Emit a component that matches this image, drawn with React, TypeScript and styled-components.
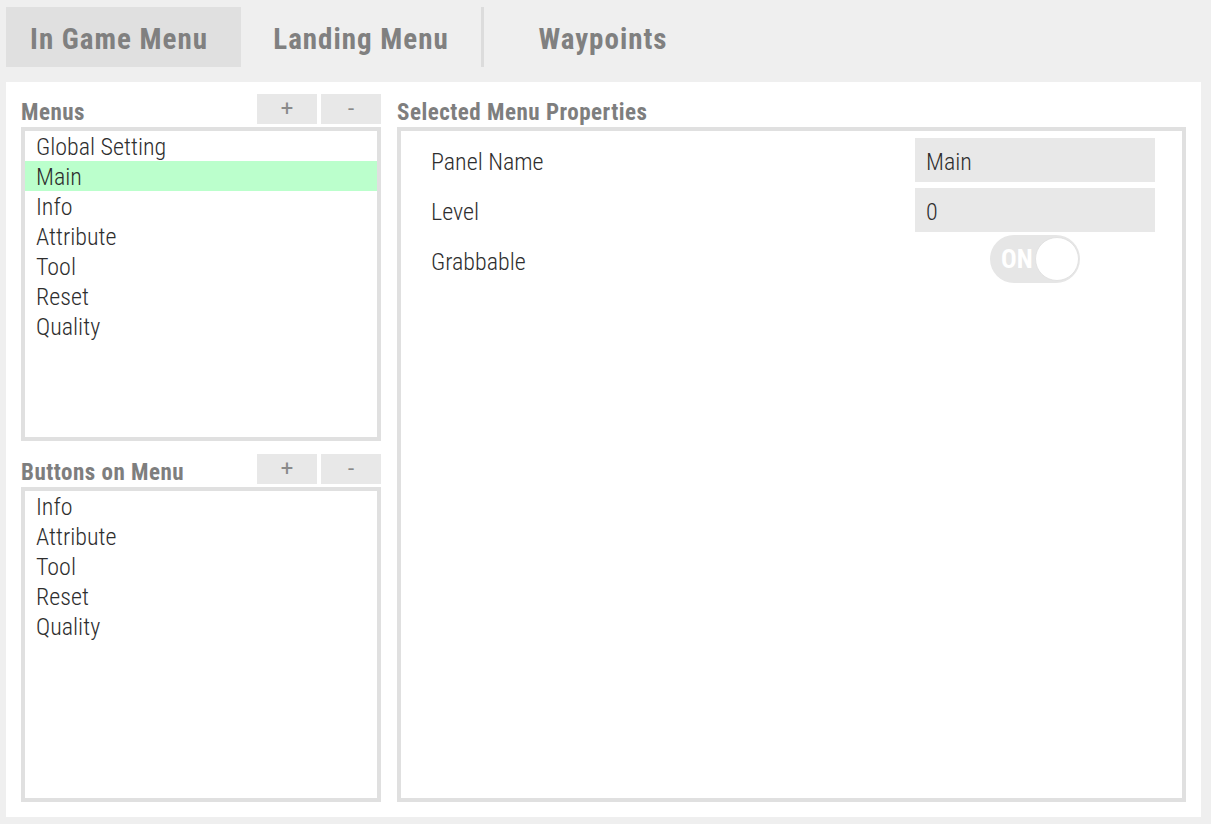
import React, { useState } from "react";
import styled, { createGlobalStyle } from "styled-components";

const GlobalStyle = createGlobalStyle`
  html, body {
    margin: 0;
    padding: 0;
    background: #efefef;
  }
  body {
    font-family: Roboto, "Liberation Sans", sans-serif;
    font-stretch: condensed;
  }
  * { box-sizing: border-box; }
`;

const Page = styled.div`
  width: 1211px;
  height: 824px;
  padding: 7px 10px 7px 6px;
  display: flex;
  flex-direction: column;
  gap: 15px;
`;

const TabBar = styled.div`
  display: flex;
  height: 60px;
`;

const Tab = styled.button<{ $active?: boolean; $divider?: boolean; $w: number; $shift?: number }>`
  width: ${(p) => p.$w}px;
  height: 60px;
  border: none;
  border-right: ${(p) => (p.$divider ? "3px solid #dcdcdc" : "none")};
  background: ${(p) => (p.$active ? "#e0e0e0" : "transparent")};
  font-family: Roboto, "Liberation Sans", sans-serif;
  font-stretch: condensed;
  font-weight: 700;
  font-size: 29px;
  letter-spacing: 1px;
  color: #808080;
  padding: 4px ${(p) => p.$shift ?? 0}px 0 0;
  cursor: pointer;
`;

const Panel = styled.div`
  flex: 1;
  background: #ffffff;
  padding: 12px 15px 15px 15px;
  display: flex;
  gap: 16px;
`;

const LeftColumn = styled.div`
  width: 360px;
  display: flex;
  flex-direction: column;
`;

const RightColumn = styled.div`
  flex: 1;
  display: flex;
  flex-direction: column;
`;

const Section = styled.div<{ $grow?: boolean }>`
  display: flex;
  flex-direction: column;
  flex: ${(p) => (p.$grow ? 1 : "none")};
  & + & {
    margin-top: 13px;
  }
`;

const Header = styled.div`
  height: 30px;
  margin-bottom: 3px;
  display: flex;
  align-items: flex-end;
  gap: 4px;
`;

const Label = styled.div`
  flex: 1;
  font-weight: 700;
  font-size: 23px;
  letter-spacing: 0.5px;
  color: #7e7e7e;
  line-height: 23px;
  margin-bottom: 0;
  white-space: nowrap;
`;

const SmallButton = styled.button`
  width: 60px;
  height: 30px;
  border: none;
  background: #e8e8e8;
  color: #8a8a8a;
  font-family: Roboto, "Liberation Sans", sans-serif;
  font-size: 22px;
  line-height: 30px;
  padding: 0;
  align-self: flex-start;
  cursor: pointer;
`;

const Box = styled.div<{ $h?: number }>`
  border: 4px solid #e0e0e0;
  background: #ffffff;
  height: ${(p) => (p.$h ? `${p.$h}px` : "auto")};
  flex: ${(p) => (p.$h ? "none" : 1)};
  overflow: hidden;
`;

const ListItem = styled.div<{ $selected?: boolean }>`
  height: 30px;
  line-height: 30px;
  padding: 1px 0 0 11px;
  font-size: 24px;
  font-weight: 350;
  color: #2e2e2e;
  background: ${(p) => (p.$selected ? "#bbffcc" : "transparent")};
  white-space: nowrap;
  cursor: default;
`;

const PropGrid = styled.div`
  display: grid;
  grid-template-columns: 1fr 240px;
  grid-auto-rows: 44px;
  row-gap: 6px;
  padding: 7px 27px 0 30px;
`;

const PropLabel = styled.div`
  font-size: 24px;
  font-weight: 350;
  color: #2e2e2e;
  display: flex;
  align-items: center;
  padding-top: 4px;
`;

const Field = styled.div`
  background: #e8e8e8;
  font-size: 24px;
  font-weight: 350;
  color: #2e2e2e;
  padding: 3px 0 0 11px;
  display: flex;
  align-items: center;
`;

const ToggleCell = styled.div`
  display: flex;
  justify-content: center;
  align-items: flex-start;
  margin-top: -3px;
`;

const Toggle = styled.div`
  position: relative;
  width: 90px;
  height: 48px;
  border-radius: 24px;
  background: #e6e6e6;
  display: flex;
  align-items: center;
  padding-left: 11px;
`;

const ToggleText = styled.span`
  font-weight: 700;
  font-size: 26px;
  color: #ffffff;
`;

const Knob = styled.span`
  position: absolute;
  right: 1px;
  top: 2px;
  width: 44px;
  height: 44px;
  border-radius: 50%;
  background: #ffffff;
  border: 1px solid #e2e2e2;
`;

const menus = ["Global Setting", "Main", "Info", "Attribute", "Tool", "Reset", "Quality"];
const buttons = ["Info", "Attribute", "Tool", "Reset", "Quality"];

export default function App() {
  const [tab] = useState(0);
  const [selected, setSelected] = useState(1);
  return (
    <>
      <GlobalStyle />
      <Page>
        <TabBar>
          <Tab $w={235} $shift={9} $active={tab === 0}>In Game Menu</Tab>
          <Tab $w={243} $divider>Landing Menu</Tab>
          <Tab $w={238}>Waypoints</Tab>
        </TabBar>
        <Panel>
          <LeftColumn>
            <Section>
              <Header>
                <Label>Menus</Label>
                <SmallButton>+</SmallButton>
                <SmallButton>-</SmallButton>
              </Header>
              <Box $h={314}>
                {menus.map((m, i) => (
                  <ListItem key={m} $selected={i === selected} onClick={() => setSelected(i)}>
                    {m}
                  </ListItem>
                ))}
              </Box>
            </Section>
            <Section $grow>
              <Header>
                <Label>Buttons on Menu</Label>
                <SmallButton>+</SmallButton>
                <SmallButton>-</SmallButton>
              </Header>
              <Box>
                {buttons.map((b) => (
                  <ListItem key={b}>{b}</ListItem>
                ))}
              </Box>
            </Section>
          </LeftColumn>
          <RightColumn>
            <Header>
              <Label>Selected Menu Properties</Label>
            </Header>
            <Box>
              <PropGrid>
                <PropLabel>Panel Name</PropLabel>
                <Field>Main</Field>
                <PropLabel>Level</PropLabel>
                <Field>0</Field>
                <PropLabel>Grabbable</PropLabel>
                <ToggleCell>
                  <Toggle>
                    <ToggleText>ON</ToggleText>
                    <Knob />
                  </Toggle>
                </ToggleCell>
              </PropGrid>
            </Box>
          </RightColumn>
        </Panel>
      </Page>
    </>
  );
}
